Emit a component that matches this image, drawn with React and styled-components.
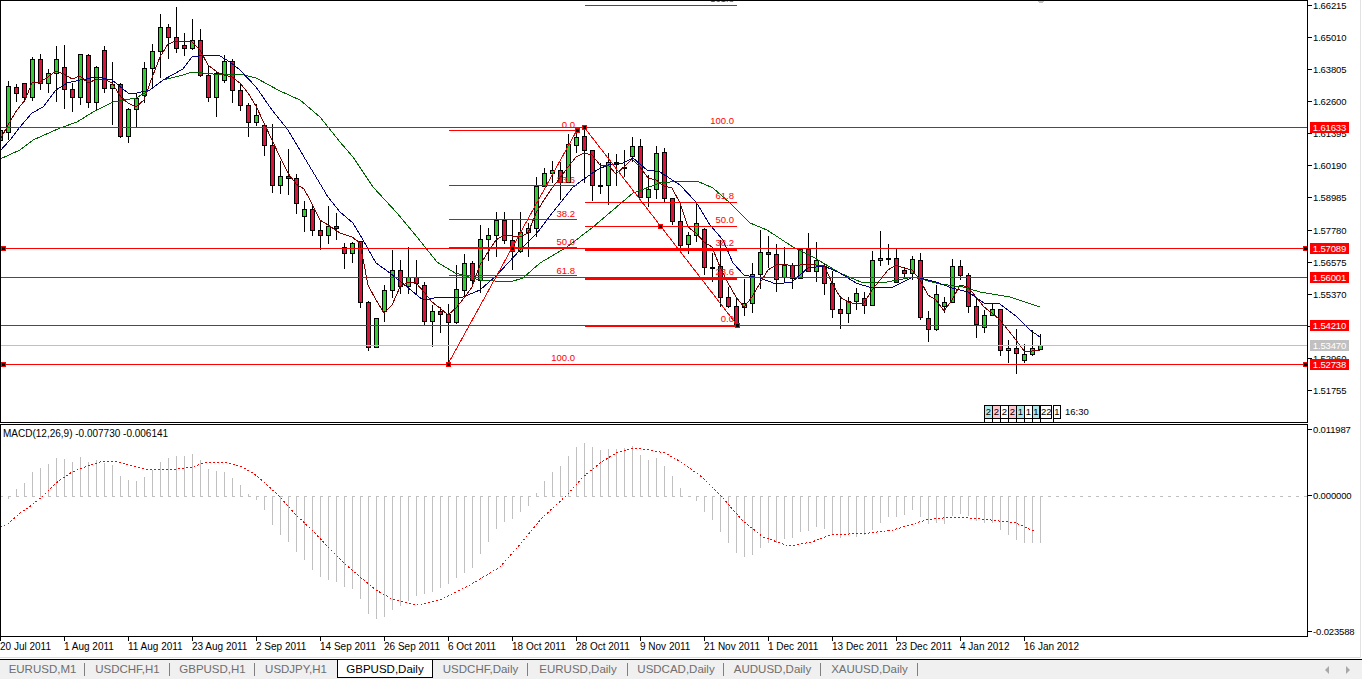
import React from "react";
import styled, { createGlobalStyle } from "styled-components";

const GlobalStyle = createGlobalStyle`
	html, body {
		margin: 0;
		padding: 0;
		background: #fff;
		font-family: "Liberation Sans", Arial, sans-serif;
	}
`;

// [wick top, body top, body bottom, wick bottom, bullish] one per bar, 8px apart
const CANDLES = [
	[122,130,140,146,1],[81,86,132,140,1],[84,87,93,102,0],[83,83,97,102,0],[57,59,97,101,1],[54,59,83,90,0],[69,73,83,93,1],[46,59,73,102,1],
	[45,67,89,109,0],[83,89,97,112,0],[54,54,97,105,1],[54,55,102,108,0],[66,67,102,110,1],[46,50,88,93,0],[62,84,88,125,1],[83,84,136,138,0],
	[108,109,136,143,1],[94,98,109,127,1],[62,68,95,103,1],[44,51,68,87,1],[14,27,51,78,1],[24,27,37,59,0],[7,37,48,53,0],[33,45,48,56,0],
	[19,40,48,50,1],[29,40,75,77,0],[66,75,97,102,0],[71,73,97,117,1],[55,61,80,83,1],[59,61,90,103,0],[83,90,105,111,0],[103,105,122,137,0],
	[104,115,122,126,1],[123,125,145,156,0],[124,145,185,193,0],[161,176,185,194,1],[149,176,178,195,0],[174,178,203,214,0],[201,209,216,232,1],[205,209,230,236,0],
	[221,230,235,250,0],[206,226,235,244,1],[213,226,228,240,0],[243,247,253,269,0],[242,243,253,263,1],[241,241,302,308,0],[301,302,347,351,0],[318,318,347,347,1],
	[285,290,311,322,1],[250,270,290,298,1],[260,270,286,294,0],[247,277,286,294,1],[260,277,283,295,0],[282,285,321,325,0],[305,311,321,347,1],[307,311,314,333,0],
	[304,314,322,363,0],[265,289,322,324,1],[254,263,290,297,1],[261,263,280,285,0],[225,239,280,293,1],[228,235,239,261,1],[212,220,235,257,1],[212,220,240,244,0],
	[220,240,251,270,0],[212,232,251,253,1],[223,228,232,257,1],[177,186,228,237,1],[168,173,186,187,1],[161,170,173,183,1],[162,170,182,200,0],[134,144,182,183,1],
	[132,137,145,153,1],[127,136,150,183,0],[150,150,185,201,0],[163,185,186,194,0],[153,162,185,205,1],[154,162,164,186,0],[150,167,168,177,0],[137,146,156,162,1],
	[139,146,197,197,0],[175,189,197,207,1],[146,153,189,199,1],[148,152,198,203,0],[198,198,221,225,0],[205,221,245,250,0],[232,235,244,254,1],[202,223,235,242,1],
	[228,229,267,275,0],[253,267,268,282,0],[240,266,297,307,0],[287,297,306,308,0],[298,306,326,326,0],[279,303,307,316,1],[263,274,303,313,1],[230,252,274,289,1],
	[236,252,254,268,0],[244,254,279,292,0],[247,265,277,282,1],[263,265,278,289,0],[248,249,278,279,1],[233,249,271,268,0],[242,260,271,282,1],[263,266,283,295,0],
	[271,283,309,318,0],[296,309,313,329,0],[297,301,313,323,1],[288,293,301,310,1],[292,298,305,314,0],[251,260,305,305,1],[231,258,260,266,1],[244,258,259,265,0],
	[249,258,282,282,0],[267,270,273,278,0],[256,259,273,280,1],[253,260,317,320,0],[311,318,329,342,0],[285,294,329,331,1],[297,302,306,313,1],[259,266,302,303,1],
	[260,266,275,280,0],[273,275,306,313,0],[298,306,324,338,0],[310,315,327,333,1],[304,309,315,316,1],[309,309,350,356,0],[340,348,350,363,1],[329,348,353,374,0],
	[344,354,360,363,1],[330,348,354,356,1],[334,345,349,349,1],
];

const MA_FAST = "0,140 8,125 17,110 25,100 32,83 40,82 48,77 56,71 64,74 72,79 80,76 88,83 97,79 104,79 112,83 121,97 128,103 136,107 144,100 150,83 160,57 168,44 176,41 184,41 192,42 200,50 208,65 217,72 224,75 232,77 240,83 248,93 256,106 264,123 272,140 280,157 288,173 296,184 304,189 310,200 320,220 328,225 340,233 352,237 360,243 368,285 376,300 384,313 392,305 400,287 408,282 416,283 424,292 432,302 440,308 448,315 456,308 464,298 472,287 480,265 488,252 496,240 504,235 512,236 520,237 528,233 536,213 544,200 552,188 560,178 568,167 576,157 584,153 592,155 600,165 608,165 616,174 624,167 632,159 640,167 648,178 656,180 664,186 672,188 680,203 688,227 696,233 704,242 712,247 720,267 728,283 736,297 744,307 752,297 760,283 768,270 776,265 784,264 792,266 800,265 808,264 816,265 824,265 832,283 840,297 848,302 856,304 864,303 872,290 880,280 888,270 896,265 904,268 912,270 920,280 928,295 936,300 944,311 952,300 960,285 968,287 976,297 984,307 992,313 1000,320 1008,330 1016,340 1024,351 1032,351 1040,350";
const MA_MID = "0,151 10,140 20,127 32,113 43,107 56,90 67,83 80,80 97,77 112,80 128,93 137,93 150,90 163,80 183,69 192,57 207,55 220,56 230,62 240,70 256,87 272,110 288,130 304,157 328,197 340,212 353,223 363,240 376,263 390,273 407,287 423,300 440,297 463,297 480,290 497,275 520,250 537,233 553,212 573,187 584,179 597,170 608,165 623,163 633,158 647,170 660,172 680,185 696,202 710,225 723,240 733,263 744,275 760,278 776,284 792,282 808,268 824,266 840,273 856,283 872,288 893,287 913,277 920,278 936,282 952,288 968,292 984,303 1000,304 1017,317 1030,330 1040,337";
const MA_SLOW = "0,159 20,150 33,140 60,128 77,122 93,112 113,102 136,98 150,90 163,80 183,75 192,72 213,74 240,74 256,78 280,91 300,100 320,117 340,142 353,157 373,187 397,213 417,237 437,262 455,273 480,280 510,282 523,278 540,263 567,247 593,227 613,210 633,193 660,183 680,181 697,181 713,188 730,203 750,223 767,230 793,247 813,257 840,273 863,283 887,282 913,277 940,284 963,287 980,292 1010,297 1040,307";

const LEVELS = [127, 248, 277, 325, 364];

// fib segments: [x1, x2, y, weight]
const FIB_SEGMENTS = [
	[449, 577, 130, 1], [449, 577, 185, 1], [449, 577, 219, 1], [449, 577, 247, 2], [449, 577, 275, 1],
	[585, 737, 5, 1], [585, 737, 202, 1], [585, 737, 226, 1], [585, 737, 249, 2], [585, 737, 278, 2], [585, 737, 325, 2],
];

const FIB_LABELS = [
	[575, 128, "0.0"], [575, 183, "23.6"], [575, 217, "38.2"], [575, 245, "50.0"], [575, 274, "61.8"], [575, 361, "100.0"],
	[734, 124, "100.0"], [734, 2, "161.8"], [734, 199, "61.8"], [734, 223, "50.0"], [734, 246, "38.2"], [734, 275, "23.6"], [734, 322, "0.0"],
];

const HANDLES = [
	[3, 248], [3, 364], [1305, 248], [1305, 364],
	[448, 364], [577, 130], [512, 248],
	[584, 127], [737, 325], [660, 226],
];

const TAGS = [
	{ y: 127, text: "1.61633", bg: "#ff0000" },
	{ y: 248, text: "1.57089", bg: "#ff0000" },
	{ y: 277, text: "1.56001", bg: "#ff0000" },
	{ y: 325, text: "1.54210", bg: "#ff0000" },
	{ y: 345, text: "1.53470", bg: "#c0c0c0" },
	{ y: 364, text: "1.52738", bg: "#ff0000" },
];

// end of each histogram bar, zero line sits at 496
const MACD_BARS = [
	496,499,489,483,472,468,464,458,459,462,457,462,460,463,465,476,480,481,477,470,462,458,456,456,454,460,469,471,472,478,485,494,
	500,510,525,535,542,552,560,570,577,580,582,587,589,599,614,619,617,610,606,601,596,594,592,588,584,578,573,568,554,542,529,522,
	519,512,506,493,481,472,466,456,447,443,447,450,449,449,448,446,455,460,458,466,476,488,496,501,512,520,532,543,553,557,555,548,
	543,543,539,538,532,531,527,529,535,538,535,537,535,530,523,517,517,515,510,517,524,523,524,516,514,516,521,523,523,530,535,540,
	543,543,543,
];

const MACD_SIGNAL = "0,527 8,524 20,513 32,505 44,495 56,483 72,472 80,469 88,466 100,462 115,461 128,465 144,469 160,470 176,469 192,467 207,462 224,462 240,466 253,473 264,482 280,497 296,515 312,530 328,547 344,563 360,577 376,590 392,599 408,603 418,605 440,600 470,585 500,567 522,542 542,518 567,495 583,477 600,463 616,453 632,448 649,450 665,453 681,462 702,477 722,497 742,520 763,537 789,546 812,542 830,535 869,533 893,530 926,520 951,517 969,518 991,520 1016,523 1036,532";

const DATES = ["20 Jul 2011", "1 Aug 2011", "11 Aug 2011", "23 Aug 2011", "2 Sep 2011", "14 Sep 2011", "26 Sep 2011", "6 Oct 2011", "18 Oct 2011", "28 Oct 2011", "9 Nov 2011", "21 Nov 2011", "1 Dec 2011", "13 Dec 2011", "23 Dec 2011", "4 Jan 2012", "16 Jan 2012"];

const TABS = [
	{ name: "EURUSD,M1", w: 85 }, { name: "USDCHF,H1", w: 85 }, { name: "GBPUSD,H1", w: 85 }, { name: "USDJPY,H1", w: 82 },
	{ name: "GBPUSD,Daily", w: 96, active: true },
	{ name: "USDCHF,Daily", w: 95 }, { name: "EURUSD,Daily", w: 100 }, { name: "USDCAD,Daily", w: 96 }, { name: "AUDUSD,Daily", w: 97 }, { name: "XAUUSD,Daily", w: 97 },
];

const TIMER = [
	{ t: "2", bg: "#b0e8e8" }, { t: "2", bg: "#ffc8d0" }, { t: "2", bg: "#fff" }, { t: "2", bg: "#ffc8d0" }, { t: "1", bg: "#b0e8e8" }, { t: "1", bg: "#fff" }, { t: "1", bg: "#b0e8e8" },
];

const Page = styled.div`
	width: 1362px;
	height: 680px;
	overflow: hidden;
	background: #fff;
	display: flex;
	flex-direction: column;
	color: #000;
	font-size: 9.5px;
`;

const ChartWindow = styled.div`
	width: 1361px;
	height: 658px;
	box-sizing: border-box;
	border-right: 1px solid #e2e2e2;
	display: flex;
	flex-direction: column;
`;

const Pane = styled.div`
	height: ${(p) => p.$h}px;
	margin-bottom: ${(p) => p.$gap || 0}px;
	display: flex;
	flex-shrink: 0;
`;

const Plot = styled.div`
	position: relative;
	width: 1308px;
	box-sizing: border-box;
	border: 1px solid #000;
	overflow: hidden;
`;

const Canvas = styled.svg`
	display: block;
	shape-rendering: crispEdges;
`;

const FibText = styled.text`
	fill: #ff0000;
	font-size: 9.5px;
	font-family: "Liberation Sans", Arial, sans-serif;
	text-anchor: end;
	shape-rendering: auto;
`;

const Axis = styled.div`
	position: relative;
	flex: 1;
	overflow: hidden;
	line-height: 11px;
`;

const Tick = styled.div`
	position: absolute;
	left: 0;
	padding-left: 5px;
	height: 11px;
	letter-spacing: -0.15px;
	white-space: nowrap;

	&::before {
		content: "";
		position: absolute;
		left: 0;
		top: 5px;
		width: 4px;
		height: 1px;
		background: #000;
	}
`;

const PriceTag = styled.div`
	position: absolute;
	left: 2px;
	width: 39px;
	height: 11px;
	background: ${(p) => p.$bg};
	color: #fff;
	text-align: center;
	letter-spacing: -0.15px;
`;

const IndicatorTitle = styled.div`
	position: absolute;
	left: 2px;
	top: 3px;
	font-size: 10px;
	line-height: 12px;
	white-space: nowrap;
`;

const TimerRow = styled.div`
	position: absolute;
	left: 983px;
	top: 404px;
	display: flex;
	align-items: flex-start;
`;

const TimerCell = styled.div`
	position: relative;
	width: ${(p) => p.$w || 8}px;
	margin-left: ${(p) => p.$ml || 0}px;
	height: 14px;
	box-sizing: border-box;
	border: 1px solid #000;
	border-right-width: ${(p) => (p.$open ? 0 : 1)}px;
	background: ${(p) => p.$bg || "#fff"};
	font-size: 9.5px;
	line-height: 12px;
	text-align: center;

	&::after {
		content: "";
		position: absolute;
		left: -1px;
		top: 13px;
		width: 1px;
		height: 4px;
		background: #000;
	}
`;

const TimerArrow = styled.div`
	position: relative;
	margin-left: 1px;
	width: 30px;
	height: 14px;
	font-size: 9.5px;
	line-height: 14px;
	padding-left: 3px;
	box-sizing: border-box;

	svg {
		position: absolute;
		left: 0;
		top: 0;
		z-index: -1;
	}
`;

const DateAxis = styled.div`
	height: 21px;
	box-sizing: border-box;
	border-bottom: 1px solid #dcdcdc;
	display: flex;
	flex-shrink: 0;
`;

const DateCell = styled.div`
	position: relative;
	width: 64px;
	flex-shrink: 0;
	padding-top: 4px;
	font-size: 10px;
	line-height: 12px;
	white-space: nowrap;

	&::before {
		content: "";
		position: absolute;
		left: 0;
		top: 0;
		width: 1px;
		height: 4px;
		background: #000;
	}
`;

const TabBar = styled.div`
	margin-top: 1px;
	height: 20px;
	box-sizing: border-box;
	border-top: 1px solid #000;
	background: #f0f0f0;
	display: flex;
	align-items: flex-start;
	flex-shrink: 0;
`;

const Tab = styled.div`
	position: relative;
	width: ${(p) => p.$w}px;
	height: ${(p) => (p.$active ? 18 : 18)}px;
	flex-shrink: 0;
	box-sizing: border-box;
	font-size: 11.5px;
	line-height: 18px;
	text-align: center;
	color: ${(p) => (p.$active ? "#000" : "#6e6e6e")};
	background: ${(p) => (p.$active ? "#fff" : "transparent")};
	border: ${(p) => (p.$active ? "1px solid #000" : "0")};
	border-top: 0;

	&::after {
		content: "";
		display: ${(p) => (p.$line ? "block" : "none")};
		position: absolute;
		right: 0;
		top: 3px;
		height: 13px;
		width: 1px;
		background: #808080;
	}
`;

const ScrollArrows = styled.div`
	margin-left: auto;
	margin-right: 12px;
	margin-top: 6px;
	display: flex;
	gap: 17px;
`;

const ScrollArrow = styled.span`
	width: 0;
	height: 0;
	border-top: 4px solid transparent;
	border-bottom: 4px solid transparent;
	border-right: ${(p) => (p.$left ? "4px solid #a8a8a8" : "0")};
	border-left: ${(p) => (p.$left ? "0" : "4px solid #a8a8a8")};
`;

const priceTicks = Array.from({ length: 13 }, (_, i) => ({
	text: (1.66215 - i * 0.01205).toFixed(5),
	y: 5 + i * 32.08,
}));

function PriceChart() {
	return (
		<Canvas width="1306" height="421" viewBox="1 1 1306 421">
			{CANDLES.map(([wt, bt, bb, wb, up], k) => (
				<g key={k}>
					<line x1={8 * k + 0.5} x2={8 * k + 0.5} y1={wt} y2={wb} stroke="#000" />
					<rect x={8 * k - 1.5} y={bt + 0.5} width="4" height={Math.max(bb - bt, 1)} fill={up ? "#32cd32" : "#dc143c"} stroke="#000" />
				</g>
			))}
			<polyline points={MA_SLOW} fill="none" stroke="#006400" />
			<polyline points={MA_MID} fill="none" stroke="#000080" />
			<polyline points={MA_FAST} fill="none" stroke="#800000" />
			{LEVELS.map((y) => (
				<line key={y} x1="0" x2="1307" y1={y + 0.5} y2={y + 0.5} stroke="#ff0000" />
			))}
			<line x1="0" x2="1307" y1="345.5" y2="345.5" stroke="#c0c0c0" />
			{FIB_SEGMENTS.map(([x1, x2, y, weight]) => (
				<line key={`${x1}-${y}`} x1={x1} x2={x2} y1={y + weight / 2} y2={y + weight / 2} stroke="#ff0000" strokeWidth={weight} />
			))}
			<polyline points="448,364 577,130" fill="none" stroke="#ff0000" />
			<polyline points="584,127 737,325" fill="none" stroke="#ff0000" />
			{FIB_LABELS.map(([x, y, text]) => (
				<FibText key={`${x}-${y}`} x={x} y={y}>{text}</FibText>
			))}
			{HANDLES.map(([x, y]) => (
				<g key={`${x}-${y}`}>
					<rect x={x - 2} y={y - 2} width="5" height="5" fill="#ff0000" />
					<rect x={x - 1} y={y - 1} width="3" height="3" fill="#000" />
				</g>
			))}
			<polygon points="1037,1 1044,1 1042,3 1039,3" fill="#c0c0c0" />
		</Canvas>
	);
}

function MacdChart() {
	return (
		<Canvas width="1306" height="211" viewBox="1 425 1306 211">
			<line x1="0" x2="1307" y1="496.5" y2="496.5" stroke="#c0c0c0" strokeDasharray="3 5" />
			{MACD_BARS.map((end, k) => (
				<line key={k} x1={8 * k + 0.5} x2={8 * k + 0.5} y1="496" y2={end} stroke="#c0c0c0" />
			))}
			<polyline points={MACD_SIGNAL} fill="none" stroke="#ff0000" strokeDasharray="2 2" />
		</Canvas>
	);
}

export default function App() {
	return (
		<Page>
			<GlobalStyle />
			<ChartWindow>
				<Pane $h={423} $gap={1}>
					<Plot>
						<PriceChart />
						<TimerRow>
							{TIMER.map((c, i) => (
								<TimerCell key={i} $bg={c.bg} $open={i < TIMER.length - 1}>{c.t}</TimerCell>
							))}
							<TimerCell $w={12}>22</TimerCell>
							<TimerCell $ml={1}>1</TimerCell>
							<TimerArrow>
								<svg width="30" height="14" viewBox="0 0 30 14">
									<polygon points="0.5,0.5 25.5,0.5 29.5,7 25.5,13.5 0.5,13.5" fill="#fff" stroke="#000" />
								</svg>
								16:30
							</TimerArrow>
						</TimerRow>
					</Plot>
					<Axis>
						{priceTicks.map((t) => (
							<Tick key={t.text} style={{ top: t.y - 5 }}>{t.text}</Tick>
						))}
						{TAGS.map((t) => (
							<PriceTag key={t.text} $bg={t.bg} style={{ top: t.y - 5 }}>{t.text}</PriceTag>
						))}
					</Axis>
				</Pane>
				<Pane $h={213}>
					<Plot>
						<MacdChart />
						<IndicatorTitle>MACD(12,26,9) -0.007730 -0.006141</IndicatorTitle>
					</Plot>
					<Axis>
						<Tick style={{ top: 0 }}>0.011987</Tick>
						<Tick style={{ top: 66 }}>0.000000</Tick>
						<Tick style={{ top: 202 }}>-0.023588</Tick>
					</Axis>
				</Pane>
				<DateAxis>
					{DATES.map((d) => (
						<DateCell key={d}>{d}</DateCell>
					))}
				</DateAxis>
			</ChartWindow>
			<TabBar>
				{TABS.map((t, i) => (
					<Tab key={t.name} $w={t.w} $active={t.active} $line={!t.active && i !== 3}>{t.name}</Tab>
				))}
				<ScrollArrows>
					<ScrollArrow $left />
					<ScrollArrow />
				</ScrollArrows>
			</TabBar>
		</Page>
	);
}
